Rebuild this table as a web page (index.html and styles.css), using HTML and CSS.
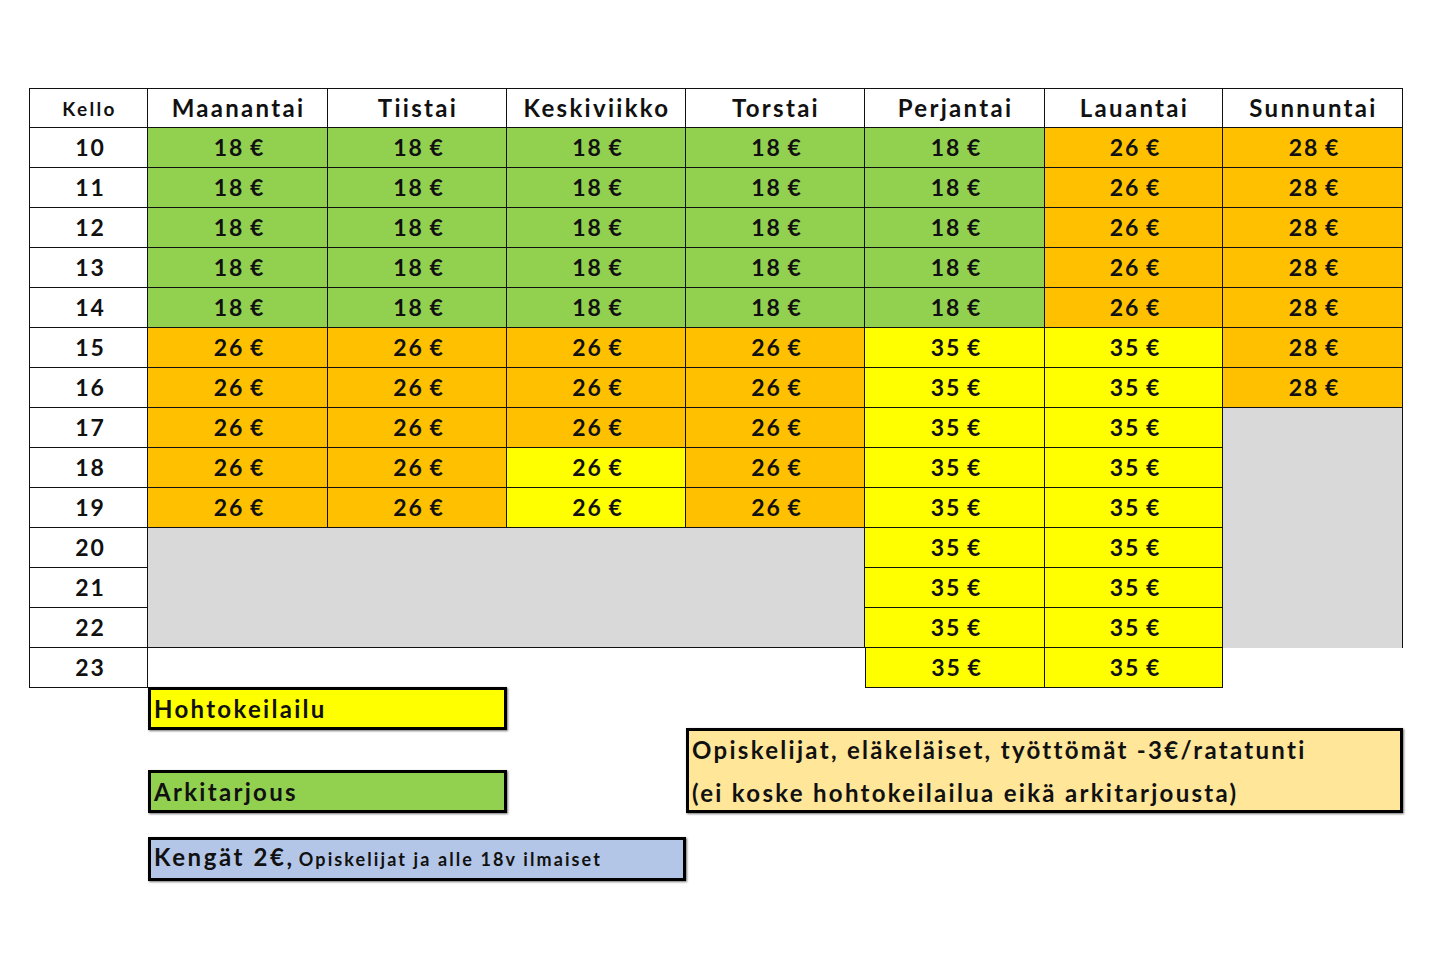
FILE: index.html
```html
<!DOCTYPE html>
<html lang="fi">
<head>
<meta charset="utf-8">
<title>Hinnasto</title>
<link rel="stylesheet" href="styles.css">
</head>
<body>
<main class="page">
  <div class="prices">
    <div class="c hd first kello">Kello</div>
    <div class="c hd">Maanantai</div>
    <div class="c hd">Tiistai</div>
    <div class="c hd">Keskiviikko</div>
    <div class="c hd">Torstai</div>
    <div class="c hd">Perjantai</div>
    <div class="c hd">Lauantai</div>
    <div class="c hd">Sunnuntai</div>

    <div class="c first hour">10</div>
    <div class="c g">18 €</div><div class="c g">18 €</div><div class="c g">18 €</div><div class="c g">18 €</div><div class="c g">18 €</div>
    <div class="c o">26 €</div><div class="c o">28 €</div>

    <div class="c first hour">11</div>
    <div class="c g">18 €</div><div class="c g">18 €</div><div class="c g">18 €</div><div class="c g">18 €</div><div class="c g">18 €</div>
    <div class="c o">26 €</div><div class="c o">28 €</div>

    <div class="c first hour">12</div>
    <div class="c g">18 €</div><div class="c g">18 €</div><div class="c g">18 €</div><div class="c g">18 €</div><div class="c g">18 €</div>
    <div class="c o">26 €</div><div class="c o">28 €</div>

    <div class="c first hour">13</div>
    <div class="c g">18 €</div><div class="c g">18 €</div><div class="c g">18 €</div><div class="c g">18 €</div><div class="c g">18 €</div>
    <div class="c o">26 €</div><div class="c o">28 €</div>

    <div class="c first hour">14</div>
    <div class="c g">18 €</div><div class="c g">18 €</div><div class="c g">18 €</div><div class="c g">18 €</div><div class="c g">18 €</div>
    <div class="c o">26 €</div><div class="c o">28 €</div>

    <div class="c first hour">15</div>
    <div class="c o">26 €</div><div class="c o">26 €</div><div class="c o">26 €</div><div class="c o">26 €</div>
    <div class="c y">35 €</div><div class="c y">35 €</div><div class="c o">28 €</div>

    <div class="c first hour">16</div>
    <div class="c o">26 €</div><div class="c o">26 €</div><div class="c o">26 €</div><div class="c o">26 €</div>
    <div class="c y">35 €</div><div class="c y">35 €</div><div class="c o">28 €</div>

    <div class="c first hour">17</div>
    <div class="c o">26 €</div><div class="c o">26 €</div><div class="c o">26 €</div><div class="c o">26 €</div>
    <div class="c y">35 €</div><div class="c y">35 €</div>
    <div class="closed closed-sun"></div>

    <div class="c first hour">18</div>
    <div class="c o">26 €</div><div class="c o">26 €</div><div class="c y">26 €</div><div class="c o">26 €</div>
    <div class="c y">35 €</div><div class="c y">35 €</div>

    <div class="c first hour">19</div>
    <div class="c o">26 €</div><div class="c o">26 €</div><div class="c y">26 €</div><div class="c o">26 €</div>
    <div class="c y">35 €</div><div class="c y">35 €</div>

    <div class="c first hour">20</div>
    <div class="closed closed-week"></div>
    <div class="c y">35 €</div><div class="c y">35 €</div>

    <div class="c first hour">21</div>
    <div class="c y">35 €</div><div class="c y">35 €</div>

    <div class="c first hour">22</div>
    <div class="c y">35 €</div><div class="c y">35 €</div>

    <div class="c first hour">23</div>
    <div class="blank blank-week"></div>
    <div class="c y left">35 €</div><div class="c y">35 €</div>
    <div class="blank"></div>
  </div>

  <div class="legend">
    <div class="key key-glow">Hohtokeilailu</div>
    <div class="key key-discount">
      <span>Opiskelijat, eläkeläiset, työttömät -3€/ratatunti</span>
      <span>(ei koske hohtokeilailua eikä arkitarjousta)</span>
    </div>
    <div class="key key-weekday">Arkitarjous</div>
    <div class="key key-shoes">Kengät 2€, <small>Opiskelijat ja alle 18v ilmaiset</small></div>
  </div>
</main>
</body>
</html>
```

FILE: styles.css
```css
* { box-sizing: border-box; }

html, body {
  margin: 0;
  background: #ffffff;
}

body {
  font-family: Lato, "Noto Sans", "Liberation Sans", sans-serif;
  font-weight: 700;
  color: #111111;
}

.page {
  padding: 88px 0 0 29px;
  width: 1440px;
  height: 960px;
}

.prices,
.legend {
  display: grid;
  grid-template-columns: 119px 180px 179px 179px 179px 180px 178px 180px;
}

.prices {
  grid-auto-rows: 40px;
}

.c {
  display: flex;
  align-items: center;
  justify-content: center;
  border-right: 1px solid #111;
  border-bottom: 1px solid #111;
  font-size: 23px;
  letter-spacing: 2px;
  word-spacing: -2px;
  padding-left: 4px;
  line-height: 1;
}

.hd {
  border-top: 1px solid #111;
  background: #ffffff;
  font-size: 24px;
  letter-spacing: 2.3px;
  word-spacing: 0;
  padding-left: 2px;
}

.kello { font-size: 19px; }

.first { border-left: 1px solid #111; }

.hour { background: #ffffff; }

.left { border-left: 1px solid #111; }

.g { background: #92d050; }
.o { background: #ffc000; }
.y { background: #ffff00; }

.closed { background: #d9d9d9; }

.closed-sun {
  grid-row: span 6;
  border-right: 1px solid #111;
}

.closed-week {
  grid-column: span 4;
  grid-row: span 3;
  border-right: 1px solid #111;
  border-bottom: 1px solid #111;
}

.blank-week {
  grid-column: span 4;
}

/* legend */
.legend {
  margin-top: -1px;
  grid-template-rows: 43px 40px 43px 24px 44px;
}

.key {
  border: 3px solid #000;
  box-shadow: 1px 1px 2px rgba(0, 0, 0, 0.55);
  font-size: 24px;
  letter-spacing: 2.3px;
  padding-left: 3px;
  display: flex;
  align-items: center;
  white-space: nowrap;
}

.key-glow {
  grid-column: 2 / 4;
  grid-row: 1;
  background: #ffff00;
}

.key-weekday {
  grid-column: 2 / 4;
  grid-row: 3;
  background: #92d050;
}

.key-shoes {
  grid-column: 2 / 5;
  grid-row: 5;
  background: #b4c6e7;
  align-items: flex-start;
  padding-top: 2px;
  letter-spacing: 2.6px;
}

.key-shoes small {
  font-size: 18px;
  letter-spacing: 2.1px;
  margin-left: 4px;
  margin-top: 6px;
}

.key-discount {
  grid-column: 5 / 9;
  grid-row: 2 / 4;
  margin-top: -2px;
  background: #ffe699;
  flex-direction: column;
  align-items: flex-start;
  justify-content: center;
  font-size: 24px;
  letter-spacing: 2.3px;
  line-height: 43px;
}
```
